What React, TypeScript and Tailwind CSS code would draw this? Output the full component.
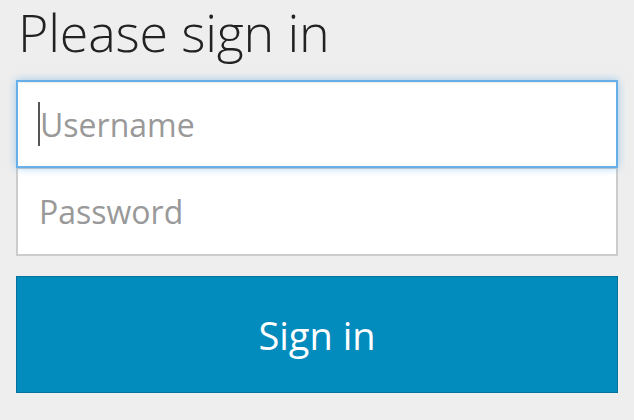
import React from "react";

export default function App() {
  return (
    <div className="w-[634px] h-[420px] bg-[#eeeeee] overflow-hidden px-[16px] font-['Open_Sans',sans-serif]">
      <h2 className="text-[52px] leading-[64px] font-light text-[#222222] pl-[2px] tracking-[-0.2px]">
        Please sign in
      </h2>
      <div className="mt-[16px] flex flex-col">
        <div className="relative z-10 h-[88px] bg-white border-2 border-[#66afe9] shadow-[inset_0_1px_1px_rgba(0,0,0,0.075),0_0_8px_rgba(102,175,233,0.6)] flex items-center pl-[20px]">
          <div className="w-[2px] h-[44px] bg-[#555555]"></div>
          <span className="text-[32px] leading-[33px] text-[#999999]">Username</span>
        </div>
        <div className="-mt-[1px] h-[89px] bg-white border-2 border-[#cccccc] flex items-center pl-[21px]">
          <span className="text-[32px] leading-[33px] text-[#999999]">Password</span>
        </div>
      </div>
      <button className="mt-[20px] w-full h-[117px] bg-[#028bbd] border border-[#00729c] text-white text-[38px] leading-[38px] flex items-center justify-center">
        Sign in
      </button>
    </div>
  );
}
